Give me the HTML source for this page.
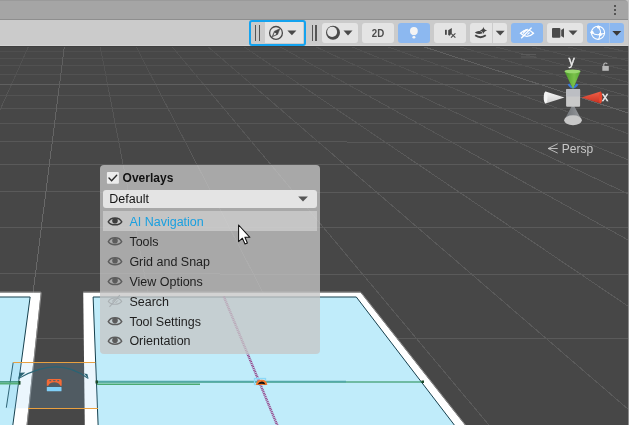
<!DOCTYPE html>
<html><head><meta charset="utf-8">
<style>
html,body{margin:0;padding:0;width:629px;height:425px;overflow:hidden;background:#c4c4c4;}
body{position:relative;font-family:"Liberation Sans",sans-serif;}
.abs{position:absolute;}
#topbar{left:0;top:0;width:628.2px;height:19px;background:#a5a5a5;border-top:1px solid #9a9a9a;box-sizing:border-box;border-top-right-radius:4px;}
#topline{left:0;top:19px;width:628.2px;height:1px;background:#8e8e8e;}
#toolbar{left:0;top:20px;width:628.2px;height:25px;background:#cbcbcb;}
#tbline{left:0;top:45px;width:629px;height:1px;background:#d4d4d4;}
#tbdark{left:0;top:46px;width:629px;height:1px;background:#3f3f3f;}
.btn{position:absolute;top:23px;height:20px;background:#e4e4e4;border-radius:3px;}
.blue{background:#8cb8f0;}
.handle{position:absolute;top:25px;width:1.3px;height:16px;background:#555;}
#rightcol{left:627.6px;top:46px;width:1.4px;height:379px;background:#8d8d8d;}
#rightcoltop{left:628.2px;top:0;width:0.8px;height:46px;background:#c4c4c4;}

#panel{left:100px;top:165px;width:220px;height:188.6px;background:rgba(198,198,198,0.77);border-radius:4px;}
.row{position:absolute;left:129.5px;font-size:12px;color:#1e1e1e;white-space:nowrap;}
</style></head><body>
<svg class="abs" style="left:0;top:0;will-change:transform" width="629" height="425" viewBox="0 0 629 425">
<rect x="0" y="46" width="629" height="379" fill="#474747"/>
<g>
<rect x="0" y="51" width="629" height="1" fill="#4f4f4f"/>
<rect x="0" y="58" width="629" height="1" fill="#505050"/>
<rect x="0" y="65" width="629" height="1" fill="#515151"/>
<rect x="0" y="74" width="629" height="1" fill="#525252"/>
<rect x="0" y="95" width="629" height="1" fill="#535353"/>
<rect x="0" y="108" width="629" height="1" fill="#555555"/>
<rect x="0" y="123" width="629" height="1" fill="#565656"/>
<rect x="0" y="141" width="347" height="1" fill="#585858"/>
<rect x="347" y="142" width="282" height="1" fill="#585858"/>
<rect x="0" y="164" width="629" height="1" fill="#5a5a5a"/>
<rect x="0" y="191" width="100" height="1" fill="#5a5a5a"/>
<rect x="100" y="192" width="529" height="1" fill="#5a5a5a"/>
<rect x="0" y="227" width="629" height="1" fill="#5a5a5a"/>
<rect x="0" y="273" width="220" height="1" fill="#5a5a5a"/>
<rect x="220" y="274" width="409" height="1" fill="#5a5a5a"/>
<rect x="0" y="338" width="629" height="1" fill="#5a5a5a"/>
<line x1="-6.97" y1="46" x2="-40.85" y2="90" stroke="#515151" stroke-width="1" shape-rendering="crispEdges"/>
<line x1="-40.85" y1="90" x2="-87.05" y2="150" stroke="#565656" stroke-width="1" shape-rendering="crispEdges"/>
<line x1="-87.05" y1="150" x2="-298.80" y2="425" stroke="#5a5a5a" stroke-width="1" shape-rendering="crispEdges"/>
<line x1="28.72" y1="46" x2="8.98" y2="90" stroke="#515151" stroke-width="1" shape-rendering="crispEdges"/>
<line x1="8.98" y1="90" x2="-17.93" y2="150" stroke="#565656" stroke-width="1" shape-rendering="crispEdges"/>
<line x1="-17.93" y1="150" x2="-141.27" y2="425" stroke="#5a5a5a" stroke-width="1" shape-rendering="crispEdges"/>
<line x1="100.09" y1="46" x2="108.65" y2="90" stroke="#515151" stroke-width="1" shape-rendering="crispEdges"/>
<line x1="108.65" y1="90" x2="120.32" y2="150" stroke="#565656" stroke-width="1" shape-rendering="crispEdges"/>
<line x1="120.32" y1="150" x2="173.81" y2="425" stroke="#5a5a5a" stroke-width="1" shape-rendering="crispEdges"/>
<line x1="135.78" y1="46" x2="158.48" y2="90" stroke="#515151" stroke-width="1" shape-rendering="crispEdges"/>
<line x1="158.48" y1="90" x2="189.44" y2="150" stroke="#565656" stroke-width="1" shape-rendering="crispEdges"/>
<line x1="189.44" y1="150" x2="331.34" y2="425" stroke="#5a5a5a" stroke-width="1" shape-rendering="crispEdges"/>
<line x1="171.46" y1="46" x2="208.31" y2="90" stroke="#515151" stroke-width="1" shape-rendering="crispEdges"/>
<line x1="208.31" y1="90" x2="258.56" y2="150" stroke="#565656" stroke-width="1" shape-rendering="crispEdges"/>
<line x1="258.56" y1="150" x2="488.88" y2="425" stroke="#5a5a5a" stroke-width="1" shape-rendering="crispEdges"/>
<line x1="207.15" y1="46" x2="258.14" y2="90" stroke="#515151" stroke-width="1" shape-rendering="crispEdges"/>
<line x1="258.14" y1="90" x2="327.69" y2="150" stroke="#565656" stroke-width="1" shape-rendering="crispEdges"/>
<line x1="327.69" y1="150" x2="646.41" y2="425" stroke="#5a5a5a" stroke-width="1" shape-rendering="crispEdges"/>
<line x1="242.84" y1="46" x2="307.98" y2="90" stroke="#515151" stroke-width="1" shape-rendering="crispEdges"/>
<line x1="307.98" y1="90" x2="396.81" y2="150" stroke="#565656" stroke-width="1" shape-rendering="crispEdges"/>
<line x1="396.81" y1="150" x2="803.94" y2="425" stroke="#5a5a5a" stroke-width="1" shape-rendering="crispEdges"/>
<line x1="278.52" y1="46" x2="357.81" y2="90" stroke="#515151" stroke-width="1" shape-rendering="crispEdges"/>
<line x1="357.81" y1="90" x2="465.93" y2="150" stroke="#565656" stroke-width="1" shape-rendering="crispEdges"/>
<line x1="465.93" y1="150" x2="961.48" y2="425" stroke="#5a5a5a" stroke-width="1" shape-rendering="crispEdges"/>
<line x1="314.21" y1="46" x2="407.64" y2="90" stroke="#515151" stroke-width="1" shape-rendering="crispEdges"/>
<line x1="407.64" y1="90" x2="535.05" y2="150" stroke="#565656" stroke-width="1" shape-rendering="crispEdges"/>
<line x1="535.05" y1="150" x2="1119.01" y2="425" stroke="#5a5a5a" stroke-width="1" shape-rendering="crispEdges"/>
<line x1="349.90" y1="46" x2="457.48" y2="90" stroke="#515151" stroke-width="1" shape-rendering="crispEdges"/>
<line x1="457.48" y1="90" x2="604.18" y2="150" stroke="#565656" stroke-width="1" shape-rendering="crispEdges"/>
<line x1="604.18" y1="150" x2="1276.55" y2="425" stroke="#5a5a5a" stroke-width="1" shape-rendering="crispEdges"/>
<line x1="385.58" y1="46" x2="507.31" y2="90" stroke="#515151" stroke-width="1" shape-rendering="crispEdges"/>
<line x1="507.31" y1="90" x2="673.30" y2="150" stroke="#565656" stroke-width="1" shape-rendering="crispEdges"/>
<line x1="673.30" y1="150" x2="1434.08" y2="425" stroke="#5a5a5a" stroke-width="1" shape-rendering="crispEdges"/>
<line x1="456.95" y1="46" x2="606.97" y2="90" stroke="#515151" stroke-width="1" shape-rendering="crispEdges"/>
<line x1="606.97" y1="90" x2="811.54" y2="150" stroke="#565656" stroke-width="1" shape-rendering="crispEdges"/>
<line x1="811.54" y1="150" x2="1749.16" y2="425" stroke="#5a5a5a" stroke-width="1" shape-rendering="crispEdges"/>
<line x1="492.64" y1="46" x2="656.80" y2="90" stroke="#515151" stroke-width="1" shape-rendering="crispEdges"/>
<line x1="656.80" y1="90" x2="880.66" y2="150" stroke="#565656" stroke-width="1" shape-rendering="crispEdges"/>
<line x1="880.66" y1="150" x2="1906.69" y2="425" stroke="#5a5a5a" stroke-width="1" shape-rendering="crispEdges"/>
<line x1="528.33" y1="46" x2="706.64" y2="90" stroke="#515151" stroke-width="1" shape-rendering="crispEdges"/>
<line x1="706.64" y1="90" x2="949.79" y2="150" stroke="#565656" stroke-width="1" shape-rendering="crispEdges"/>
<line x1="949.79" y1="150" x2="2064.23" y2="425" stroke="#5a5a5a" stroke-width="1" shape-rendering="crispEdges"/>
<line x1="564.01" y1="46" x2="756.47" y2="90" stroke="#515151" stroke-width="1" shape-rendering="crispEdges"/>
<line x1="756.47" y1="90" x2="1018.91" y2="150" stroke="#565656" stroke-width="1" shape-rendering="crispEdges"/>
<line x1="1018.91" y1="150" x2="2221.76" y2="425" stroke="#5a5a5a" stroke-width="1" shape-rendering="crispEdges"/>
<line x1="599.70" y1="46" x2="806.30" y2="90" stroke="#515151" stroke-width="1" shape-rendering="crispEdges"/>
<line x1="806.30" y1="90" x2="1088.03" y2="150" stroke="#565656" stroke-width="1" shape-rendering="crispEdges"/>
<line x1="1088.03" y1="150" x2="2379.30" y2="425" stroke="#5a5a5a" stroke-width="1" shape-rendering="crispEdges"/>
<line x1="635.39" y1="46" x2="856.14" y2="90" stroke="#515151" stroke-width="1" shape-rendering="crispEdges"/>
<line x1="856.14" y1="90" x2="1157.15" y2="150" stroke="#565656" stroke-width="1" shape-rendering="crispEdges"/>
<line x1="1157.15" y1="150" x2="2536.83" y2="425" stroke="#5a5a5a" stroke-width="1" shape-rendering="crispEdges"/>
<rect x="0" y="84" width="629" height="1" fill="#606060"/>
<line x1="64.40" y1="46" x2="58.81" y2="90" stroke="#5f5f5f" stroke-width="1" shape-rendering="crispEdges"/>
<line x1="58.81" y1="90" x2="51.20" y2="150" stroke="#646464" stroke-width="1" shape-rendering="crispEdges"/>
<line x1="51.20" y1="150" x2="16.27" y2="425" stroke="#686868" stroke-width="1" shape-rendering="crispEdges"/>
<line x1="421.27" y1="46" x2="557.14" y2="90" stroke="#5f5f5f" stroke-width="1" shape-rendering="crispEdges"/>
<line x1="557.14" y1="90" x2="742.42" y2="150" stroke="#646464" stroke-width="1" shape-rendering="crispEdges"/>
<line x1="742.42" y1="150" x2="1591.62" y2="425" stroke="#686868" stroke-width="1" shape-rendering="crispEdges"/>
</g>
<polygon points="-5.00,292.50 40.75,292.50 24.97,440.00 -5.00,440.00" fill="#ffffff" />
<polygon points="-5.00,297.00 30.13,297.00 10.82,440.00 -5.00,440.00" fill="#c0ecfa" stroke="#16404e" stroke-width="1"/>
<polygon points="83.22,292.50 360.53,292.50 476.69,440.00 84.96,440.00" fill="#ffffff" />
<polygon points="93.12,297.00 356.29,297.00 465.83,440.00 98.69,440.00" fill="#c0ecfa" stroke="#16404e" stroke-width="1"/>
<line x1="361.13" y1="292.5" x2="477.29" y2="440" stroke="#8a8a8a" stroke-width="1"/>
<line x1="41.25" y1="292.5" x2="25.47" y2="440" stroke="#9a9a9a" stroke-width="0.8"/>
<line x1="-5" y1="292.0" x2="40.75" y2="292.0" stroke="#8a8a8a" stroke-width="1"/>
<line x1="83.22" y1="292.0" x2="360.53" y2="292.0" stroke="#8a8a8a" stroke-width="1"/>
<polygon points="13.20,362.40 95.30,362.40 98.00,408.30 6.30,408.30" fill="rgba(130,200,240,0.16)" />
<line x1="13.2" y1="362.4" x2="6.3" y2="407.7" stroke="#1f5566" stroke-width="0.9"/>
<line x1="13.2" y1="362.5" x2="95.3" y2="362.5" stroke="#e8a040" stroke-width="1"/>
<line x1="28" y1="408.5" x2="98" y2="408.5" stroke="#e8a040" stroke-width="1"/>
<path d="M18.8,378.4 Q58,355.4 88,378.4" fill="none" stroke="#2a6474" stroke-width="1.1"/>
<path d="M18.2,379 L19.5,372.8 L25.3,372.6 Z" fill="#2a6474"/>
<path d="M88.6,379 L87.4,374 L84,373.6 Z" fill="#2a6474"/>
<path d="M46.8,385.8 L46.8,380.8 Q46.8,379 48.8,379 L59.8,379 Q61.7,379 61.7,380.8 L61.7,385.8 L60.2,385.8 Q59.2,382.3 54.25,382.3 Q49.3,382.3 48.3,385.8 Z" fill="#f46a36"/>
<ellipse cx="50.3" cy="380.7" rx="1.1" ry="0.65" fill="#56606a"/><ellipse cx="54.3" cy="380.6" rx="1.6" ry="0.65" fill="#56606a"/><ellipse cx="58.2" cy="380.7" rx="1.1" ry="0.65" fill="#56606a"/>
<rect x="46.8" y="387" width="14.7" height="4.2" rx="0.5" fill="#80d0f8"/>
<rect x="0" y="381.2" width="20" height="1.3" fill="#2f8a70"/>
<rect x="0" y="382.5" width="20" height="2" fill="#56b07a"/>
<rect x="18.5" y="381" width="2" height="3.6" fill="#1a4a2a"/>
<line x1="97" y1="382" x2="422.7" y2="382" stroke="#1f8a4c" stroke-width="1.1"/>
<line x1="97" y1="381.6" x2="346" y2="381.6" stroke="#52a8a8" stroke-width="1.8"/>
<line x1="97" y1="384.2" x2="200" y2="384.2" stroke="#4aaa70" stroke-width="1.5"/>
<rect x="95.5" y="380.5" width="2.5" height="3" fill="#1a4a2a"/>
<rect x="421.5" y="380.5" width="2.5" height="2.5" fill="#1a4a2a"/>
<line x1="223.8" y1="296.5" x2="290" y2="456" stroke="#94468a" stroke-width="2.5" stroke-dasharray="1.1 0.7"/>
<rect x="254.5" y="378.5" width="11" height="6" fill="none" stroke="#8ad8f8" stroke-width="1.3"/>
<path d="M255.8,385 Q256.5,379.8 261.5,379.8 Q266.8,379.8 267.3,385 Z" fill="#f07a30"/>
<path d="M257.5,384.5 Q259,381.8 262,381.6 Q264.5,381.6 265.5,384.5 Q261.5,383 257.5,384.5 Z" fill="#101010"/>
<line x1="521" y1="54.5" x2="536" y2="54.5" stroke="#5a5a5a" stroke-width="1"/>
<line x1="521" y1="57" x2="536" y2="57" stroke="#5a5a5a" stroke-width="1"/>
<defs><linearGradient id="gc" x1="0" x2="1"><stop offset="0" stop-color="#6c7074"/><stop offset="1" stop-color="#9a9ca0"/></linearGradient><linearGradient id="grn" x1="0" x2="1"><stop offset="0" stop-color="#4a9a2a"/><stop offset="0.6" stop-color="#7ac24a"/><stop offset="1" stop-color="#5aa838"/></linearGradient><linearGradient id="wht" x1="0" y1="0" x2="0" y2="1"><stop offset="0" stop-color="#f8f8f8"/><stop offset="1" stop-color="#d0d0d0"/></linearGradient><linearGradient id="red" x1="0" y1="0" x2="0" y2="1"><stop offset="0" stop-color="#f06048"/><stop offset="1" stop-color="#c83020"/></linearGradient></defs>
<path d="M573,103.8 L564.2,120.3 L581.8,120.3 Z" fill="url(#gc)"/>
<ellipse cx="573" cy="120.3" rx="8.8" ry="5" fill="#c8c8c8"/>
<path d="M564.5,97.5 L545.6,91.6 L545.6,103.6 Z" fill="url(#wht)"/>
<ellipse cx="545.6" cy="97.6" rx="1.9" ry="6" fill="#f4f4f4"/>
<path d="M581.4,97.5 L600.6,91.6 L600.6,103.6 Z" fill="url(#red)"/>
<ellipse cx="600.6" cy="97.6" rx="1.6" ry="6" fill="#e84830"/>
<path d="M568.5,84 Q573,91 577.5,84" fill="none" stroke="#3a78d8" stroke-width="2.2"/>
<rect x="566.1" y="88.9" width="14" height="17.8" rx="1" fill="#c9c9c9"/>
<rect x="566.1" y="88.9" width="14" height="7.6" rx="1" fill="#bcbec3"/>
<path d="M573,89 L564.5,71.3 L580.5,71.3 Z" fill="url(#grn)"/>
<ellipse cx="572.5" cy="71.3" rx="8" ry="1.9" fill="#9ad870"/>
<text x="571.5" y="64.5" font-size="12.5" font-family="Liberation Sans" fill="#ececec" stroke="#ececec" stroke-width="0.35" text-anchor="middle">y</text>
<text x="605" y="101.2" font-size="12.5" font-family="Liberation Sans" fill="#f0f0f0" stroke="#f0f0f0" stroke-width="0.35" text-anchor="middle">x</text>
<rect x="602.3" y="66" width="6.5" height="4.8" fill="#b8b8b8"/>
<path d="M603.8,66 L603.8,64.2 Q605.5,62 607.3,64" fill="none" stroke="#b8b8b8" stroke-width="1.1"/>
<path d="M557.7,143.8 L548.1,148.5 L557.7,153.1 M548.1,148.5 L557.7,148.5" fill="none" stroke="#c8c8c8" stroke-width="0.9"/>
<text x="561.8" y="152.9" font-size="12" font-family="Liberation Sans" fill="#c8c8c8">Persp</text>
</svg>
<div id="topbar" class="abs"></div>
<div id="topline" class="abs"></div>
<div id="toolbar" class="abs"></div>
<div id="tbline" class="abs"></div>
<div id="tbdark" class="abs"></div>
<div class="abs" style="left:613.8px;top:5px;width:2.2px;height:2.2px;background:#3a3a3a;border-radius:1px"></div>
<div class="abs" style="left:613.8px;top:9px;width:2.2px;height:2.2px;background:#3a3a3a;border-radius:1px"></div>
<div class="abs" style="left:613.8px;top:13px;width:2.2px;height:2.2px;background:#3a3a3a;border-radius:1px"></div>
<div class="abs" style="left:249px;top:20px;width:57px;height:26px;box-sizing:border-box;border:2px solid #14a3ef;border-radius:3px"></div>
<div class="abs" style="left:264.8px;top:22.4px;width:37.8px;height:20.3px;background:#e4e4e4"></div>
<div class="handle" style="left:254.5px"></div>
<div class="handle" style="left:258.5px"></div>
<div class="handle" style="left:311.5px"></div>
<div class="handle" style="left:315.3px"></div>
<div class="btn " style="left:322px;width:36px"></div>
<div class="btn " style="left:362px;width:32px"></div>
<div class="btn blue" style="left:398px;width:32px"></div>
<div class="btn " style="left:434px;width:32px"></div>
<div class="btn " style="left:470px;width:37px"></div>
<div class="btn blue" style="left:511px;width:32px"></div>
<div class="btn " style="left:547px;width:36px"></div>
<div class="btn blue" style="left:587px;width:37px"></div>
<div class="abs" style="left:492px;top:23px;width:1px;height:20px;background:#cccccc"></div>
<div class="abs" style="left:609px;top:23px;width:1px;height:20px;background:#a8c4e8"></div>
<svg class="abs" style="left:0;top:0;will-change:transform" width="629" height="50" viewBox="0 0 629 50"><circle cx="276" cy="32.9" r="6.4" fill="none" stroke="#4a4a4a" stroke-width="1.3"/><path d="M271.9,37.1 L274.3,31.2 L280,28.6 L277.7,34.4 Z" fill="#484848" stroke="#484848" stroke-width="0.4" stroke-linejoin="round"/><path d="M273.3,35.7 L274.6,32.6 L276.3,33.5 L275.9,34.4 Z" fill="#e4e4e4"/><path d="M287.4,30.4 L296.4,30.4 L291.9,35.199999999999996 Z" fill="#4a4a4a"/><circle cx="333" cy="32.8" r="7" fill="#4a4a4a"/><circle cx="332.1" cy="31.9" r="5.05" fill="#e4e4e4"/><path d="M343.5,30.6 L352.5,30.6 L348,35.4 Z" fill="#4a4a4a"/><text x="371.8" y="37" font-size="11" font-weight="bold" fill="#4c4c4c" textLength="12.4" lengthAdjust="spacingAndGlyphs" font-family="Liberation Sans">2D</text><circle cx="413.9" cy="31" r="3.9" fill="#f4f4f4"/><rect x="412.3" y="33.5" width="3.2" height="1.6" fill="#f4f4f4"/><rect x="412.4" y="35.9" width="3" height="2.6" rx="1.3" fill="#f4f4f4"/><rect x="445" y="29.8" width="1.8" height="5" fill="#4a4a4a"/><path d="M448.2,30.2 L451.8,28 L451.8,33 L449.8,35.8 L448.2,35 Z" fill="#4a4a4a"/><path d="M451,33.3 L455.4,37.6 M455.4,33.3 L451,37.6" stroke="#4a4a4a" stroke-width="1.1"/><path d="M483.4,26.8 Q483.9,29.9 487.2,30.4 Q483.9,30.9 483.4,33.9 Q482.9,30.9 479.7,30.4 Q482.9,29.9 483.4,26.8 Z" fill="#444"/><path d="M474.8,32.6 Q477.5,30.2 480.8,31.3 Q482,32 482.6,33.3 Q478.5,35.2 474.8,32.6 Z" fill="#444"/><path d="M475.2,35.3 Q480.5,39.2 485.8,35.3" fill="none" stroke="#444" stroke-width="1.9"/><path d="M495.7,30.700000000000003 L504.7,30.700000000000003 L500.2,35.5 Z" fill="#4a4a4a"/><path d="M520.5,33.2 Q527,26.5 533.5,33.2 Q527,39.5 520.5,33.2 Z" fill="none" stroke="#ffffff" stroke-width="1.3"/><line x1="521.2" y1="38.2" x2="531.6" y2="27.6" stroke="#ffffff" stroke-width="1.3"/><path d="M523.2,33.6 Q523.2,29.6 527.6,29.3 Z" fill="#ffffff" stroke="#ffffff" stroke-width="0.8"/><line x1="527.3" y1="34.6" x2="529.6" y2="32.5" stroke="#ffffff" stroke-width="1.1"/><rect x="552" y="28" width="8.4" height="9.8" rx="1" fill="#4a4a4a"/><path d="M561.2,30 L564,28.2 L564,37.8 L561.2,35.9 Z" fill="#4a4a4a"/><path d="M568.5,30.4 L577.5,30.4 L573,35.199999999999996 Z" fill="#4a4a4a"/><circle cx="598" cy="32.8" r="6.6" fill="none" stroke="#ffffff" stroke-width="1.1"/><path d="M592,32.3 Q595.5,35.8 600.3,34.4 L605,33.2 M598.4,27 Q601.2,30.5 600.3,34.4 L598.6,39.6" fill="none" stroke="#ffffff" stroke-width="1.1"/><circle cx="598.4" cy="27" r="1.6" fill="#fff"/><circle cx="592" cy="32.3" r="1.6" fill="#fff"/><circle cx="600.3" cy="34.4" r="1.6" fill="#fff"/><path d="M612.3,30.9 L621.3,30.9 L616.8,35.699999999999996 Z" fill="#3a3a3a"/></svg>
<div id="rightcol" class="abs"></div>
<div id="rightcoltop" class="abs"></div>
<div id="panel" class="abs"></div>
<svg class="abs" style="will-change:transform;left:0;top:0;font-family:'Liberation Sans',sans-serif" width="629" height="425"><rect x="106.9" y="172" width="12" height="11.8" rx="1" fill="#ececec"/><path d="M109,178.1 L111.6,180.7 L116.7,175.3" fill="none" stroke="#2a2a2a" stroke-width="1.4" stroke-linecap="round"/><text x="122.6" y="181.6" font-size="12" font-weight="bold" fill="#111">Overlays</text><rect x="103" y="190" width="214" height="18" rx="3" fill="#e4e4e4"/><text x="109.3" y="203.2" font-size="12.5" fill="#151515">Default</text><path d="M298.2,196.6 L307.9,196.6 L303,201.4 Z" fill="#555"/><rect x="103" y="211" width="214" height="20" fill="rgba(225,225,225,0.5)"/><text x="129.4" y="225.8" font-size="12.5" fill="#1aa0e0">AI Navigation</text><path d="M108.3,221.80 C110.8,216.60 119.2,216.60 121.7,221.80 C119.2,225.80 110.8,225.80 108.3,221.80 Z" fill="none" stroke="#3e3e3e" stroke-width="1.5"/><circle cx="115" cy="220.80" r="2.8" fill="#3e3e3e"/><text x="129.4" y="245.7" font-size="12.5" fill="#1e1e1e">Tools</text><path d="M108.3,241.70 C110.8,236.50 119.2,236.50 121.7,241.70 C119.2,245.70 110.8,245.70 108.3,241.70 Z" fill="none" stroke="#5c5c5c" stroke-width="1.5"/><circle cx="115" cy="240.70" r="2.8" fill="#5c5c5c"/><text x="129.4" y="265.7" font-size="12.5" fill="#1e1e1e">Grid and Snap</text><path d="M108.3,261.70 C110.8,256.50 119.2,256.50 121.7,261.70 C119.2,265.70 110.8,265.70 108.3,261.70 Z" fill="none" stroke="#5c5c5c" stroke-width="1.5"/><circle cx="115" cy="260.70" r="2.8" fill="#5c5c5c"/><text x="129.4" y="285.6" font-size="12.5" fill="#1e1e1e">View Options</text><path d="M108.3,281.60 C110.8,276.40 119.2,276.40 121.7,281.60 C119.2,285.60 110.8,285.60 108.3,281.60 Z" fill="none" stroke="#5c5c5c" stroke-width="1.5"/><circle cx="115" cy="280.60" r="2.8" fill="#5c5c5c"/><text x="129.4" y="305.6" font-size="12.5" fill="#1e1e1e">Search</text><path d="M108.3,301.40 C110.8,296.80 119.2,296.80 121.7,301.40 C119.2,305.20 110.8,305.20 108.3,301.40 Z" fill="none" stroke="#a9afb2" stroke-width="1.1"/><line x1="109.5" y1="306.80" x2="119.8" y2="295.20" stroke="#a9afb2" stroke-width="1.1"/><path d="M111.8,302.20 Q112.5,298.40 116.2,298.40 Z" fill="#a9afb2"/><line x1="115.5" y1="303.00" x2="117.8" y2="300.50" stroke="#a9afb2" stroke-width="1"/><text x="129.4" y="325.6" font-size="12.5" fill="#1e1e1e">Tool Settings</text><path d="M108.3,321.60 C110.8,316.40 119.2,316.40 121.7,321.60 C119.2,325.60 110.8,325.60 108.3,321.60 Z" fill="none" stroke="#5c5c5c" stroke-width="1.5"/><circle cx="115" cy="320.60" r="2.8" fill="#5c5c5c"/><text x="129.4" y="345.2" font-size="12.5" fill="#1e1e1e">Orientation</text><path d="M108.3,341.20 C110.8,336.00 119.2,336.00 121.7,341.20 C119.2,345.20 110.8,345.20 108.3,341.20 Z" fill="none" stroke="#5c5c5c" stroke-width="1.5"/><circle cx="115" cy="340.20" r="2.8" fill="#5c5c5c"/><path d="M238.6,225 L238.6,241.6 L242.4,238.2 L245,244 L247.4,243 L244.9,237.3 L249.9,237.3 Z" fill="#ffffff" stroke="#111" stroke-width="1.05" stroke-linejoin="round"/></svg>
</body></html>
